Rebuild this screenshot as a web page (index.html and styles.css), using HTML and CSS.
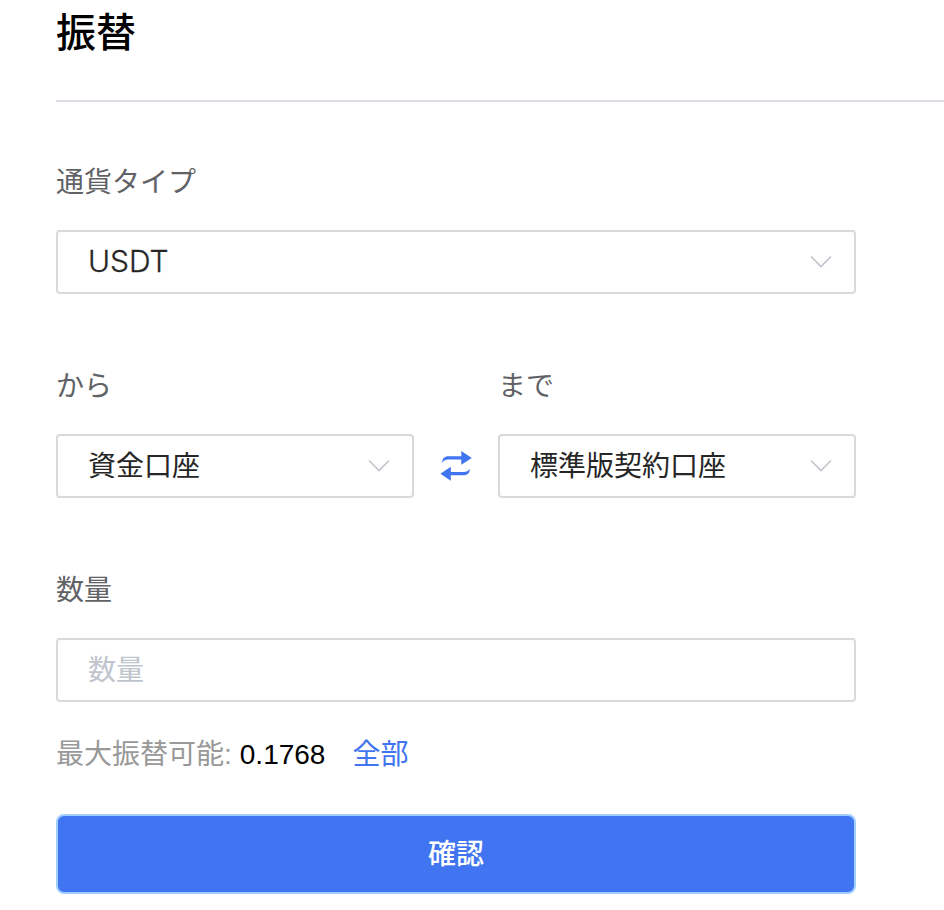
FILE: index.html
```html
<!DOCTYPE html>
<html lang="ja">
<head>
    <meta charset="UTF-8">
    <meta name="viewport" content="width=device-width, initial-scale=1.0">
    <title>振替</title>
    <link rel="stylesheet" href="styles.css">
</head>
<body>
    <h1 class="title">振替</h1>
    <form class="transfer-form">
        <div class="field">
            <label class="label">通貨タイプ</label>
            <div class="select">
                <span class="latin">USDT</span>
                <svg class="arrow" viewBox="0 0 22 14"><path d="M1 1.5L11 11.5L21 1.5"/></svg>
            </div>
        </div>
        <div class="accounts">
            <div class="field">
                <label class="label">から</label>
                <div class="select">
                    <span class="value">資金口座</span>
                    <svg class="arrow" viewBox="0 0 22 14"><path d="M1 1.5L11 11.5L21 1.5"/></svg>
                </div>
            </div>
            <svg class="swap" viewBox="0 0 32 31">
                <path d="M2.2 12.8C2.2 8.5 4.5 6.3 8.5 6.3H21.3V1L31.8 7.9L21.3 14.8V9.6H8.5C5 9.6 4.2 10.5 2.2 12.8Z"/>
                <path d="M29.8 18.8C29.8 23 27.8 25.3 23.5 25.3H10.8V30.8L0.4 23.7L10.8 16.8V22H23.5C27 22 28 21 29.8 18.8Z"/>
            </svg>
            <div class="field">
                <label class="label">まで</label>
                <div class="select">
                    <span class="value">標準版契約口座</span>
                    <svg class="arrow" viewBox="0 0 22 14"><path d="M1 1.5L11 11.5L21 1.5"/></svg>
                </div>
            </div>
        </div>
        <div class="field">
            <label class="label" for="amount">数量</label>
            <input class="input" type="text" id="amount" placeholder="数量">
        </div>
        <div class="available">
            <span>最大振替可能:</span>
            <span class="balance">0.1768</span>
            <a class="all">全部</a>
        </div>
        <button class="confirm" type="button">確認</button>
    </form>
</body>
</html>
```
FILE: styles.css
```css
* {
    box-sizing: border-box;
}

body {
    font-family: "Liberation Sans", "Noto Sans CJK JP", sans-serif;
    font-size: 28px;
    line-height: 40px;
    background-color: #fff;
    color: #000;
    margin: 0;
    padding-left: 56px;
    overflow: hidden;
}

.title {
    height: 102px;
    margin: 0;
    padding-top: 3px;
    border-bottom: 2px solid #dcdfe6;
    font-size: 40px;
    font-weight: 500;
    line-height: 60px;
}

.transfer-form {
    width: 800px;
    padding-top: 60px;
}

.field {
    margin-bottom: 72px;
}

.label {
    display: block;
    margin-bottom: 27px;
    padding-top: 1px;
    color: #606266;
}

.select, .input {
    width: 100%;
    height: 64px;
    padding: 0 30px;
    border: 2px solid #d9d9d9;
    border-radius: 4px;
    background-color: #fff;
    color: #262626;
}

.select {
    display: flex;
    align-items: center;
    justify-content: space-between;
    padding-right: 22px;
}

.value {
    padding-top: 2px;
}

.input {
    display: block;
    padding-top: 2px;
    font: inherit;
}

.input::placeholder {
    color: #c0c4cc;
    opacity: 1;
}

.latin {
    padding-bottom: 2px;
    font-family: Inter, sans-serif;
    font-size: 30px;
    font-weight: 300;
    -webkit-text-stroke: 0.3px #262626;
}

.arrow {
    width: 22px;
    height: 14px;
    fill: none;
    stroke: #c0c4cc;
    stroke-width: 1.6;
}

.accounts {
    display: grid;
    grid-template-columns: 358px 32px 358px;
    justify-content: space-between;
}

.swap {
    width: 32px;
    height: 31px;
    margin-top: 84px;
    fill: #4074f0;
}

.transfer-form > .field:nth-child(3) {
    margin-bottom: 32px;
}

.available {
    display: flex;
    height: 40px;
    margin-bottom: 40px;
    padding-top: 1px;
    color: #999;
}

.balance {
    margin-left: 8px;
    color: #000;
}

.all {
    margin-left: 27px;
    color: #4074f0;
    cursor: pointer;
}

.confirm {
    width: 100%;
    height: 80px;
    padding-top: 3px;
    border: 2px solid #a0cfff;
    border-radius: 8px;
    background-color: #4074f0;
    color: #fff;
    font: inherit;
    font-weight: 500;
    cursor: pointer;
}
```
